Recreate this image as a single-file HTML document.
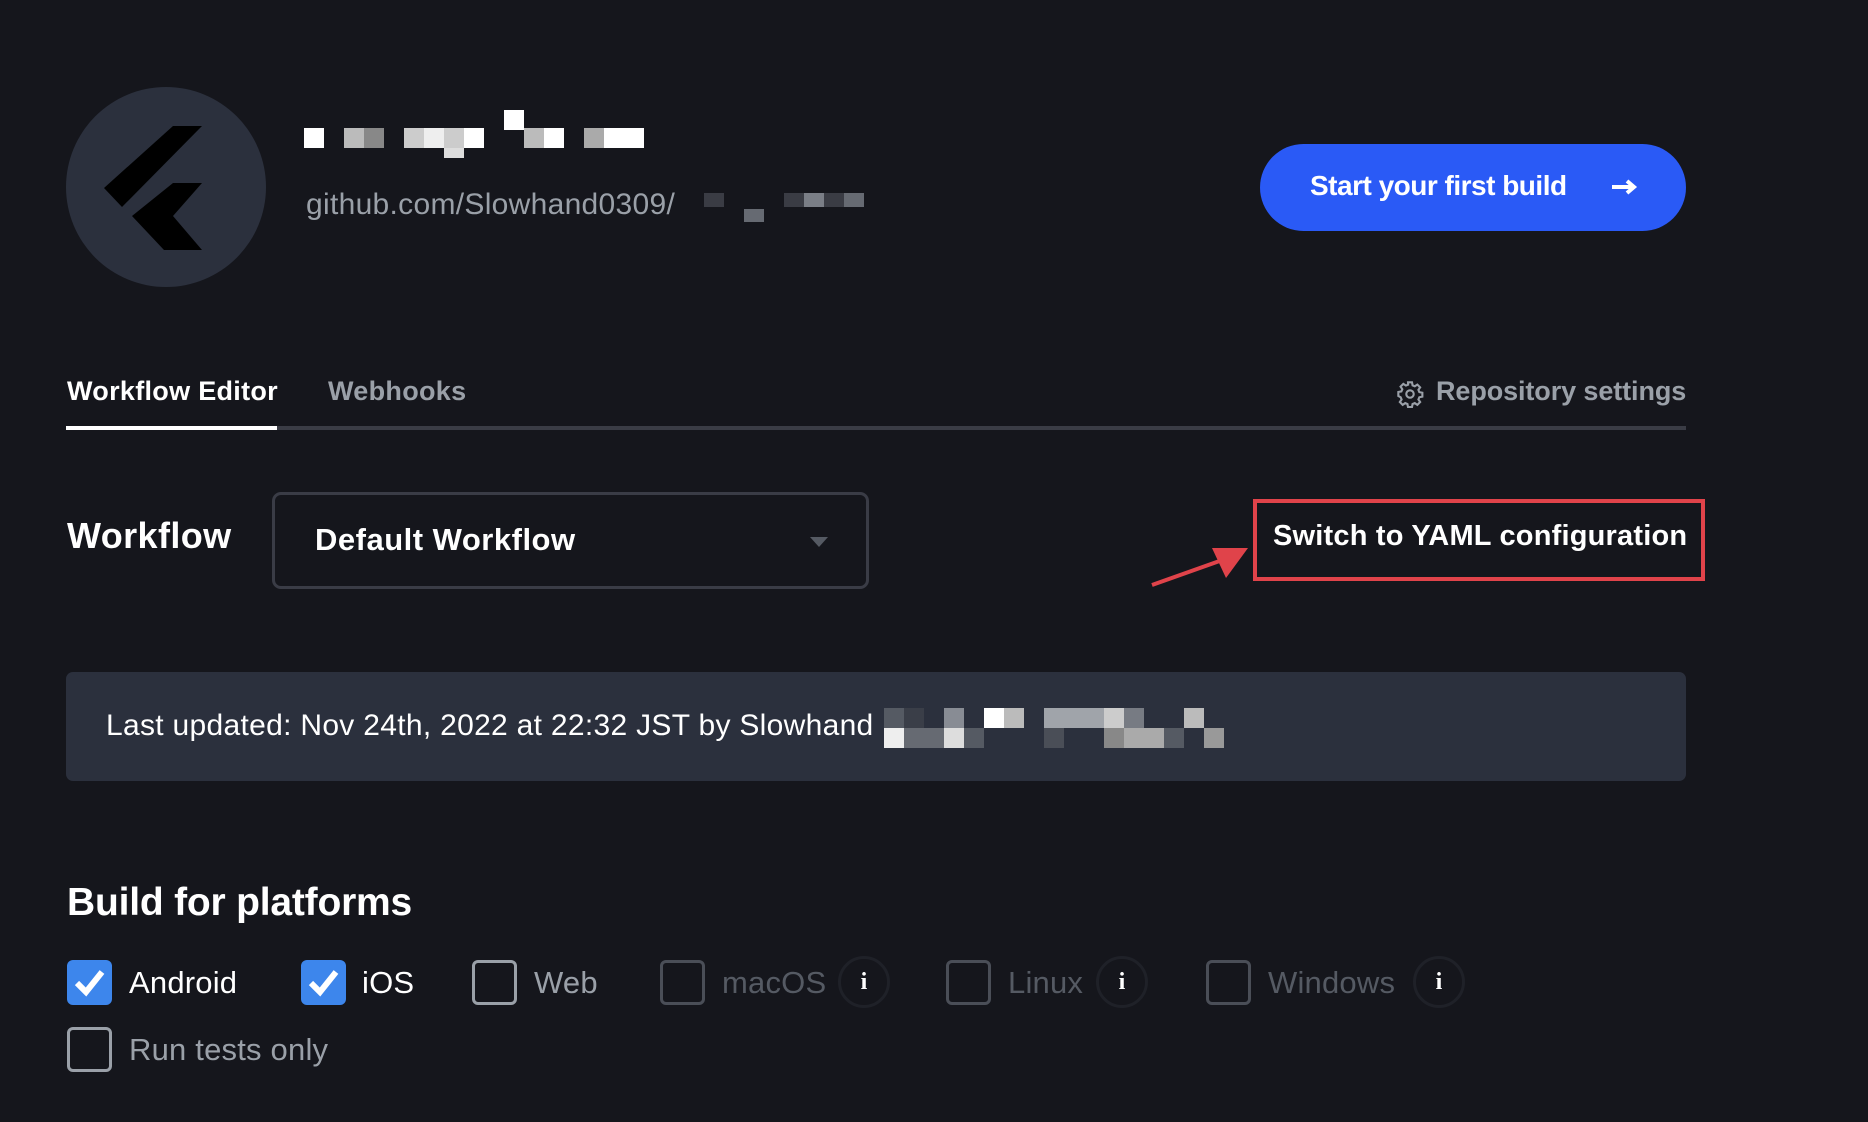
<!DOCTYPE html>
<html><head><meta charset="utf-8"><style>
*{margin:0;padding:0;box-sizing:border-box}
body{width:1868px;height:1122px;background:#15161c;font-family:"Liberation Sans",sans-serif;position:relative;overflow:hidden;color:#fff}
.a{position:absolute;white-space:nowrap}
.px{position:absolute}
.cb{position:absolute;width:45px;height:45px;border-radius:6px;border:3px solid #9aa0a8}
.cb.on{background:#3d86ec;border:none}
.cb.dis{border-color:#4a4e57}
.lbl{position:absolute;font-size:31px;line-height:45px;letter-spacing:0.2px}
.info{position:absolute;width:52px;height:52px;border-radius:50%;border:3px solid #1f2128;color:#fff;font-size:24px;font-weight:bold;text-align:center;line-height:46px;font-family:"Liberation Serif",serif}
</style></head><body>
<div class="a" style="left:66px;top:87px;width:200px;height:200px;border-radius:50%;background:#2b303d"></div>
<svg class="a" style="left:66px;top:87px" width="200" height="200" viewBox="0 0 200 200">
<polygon points="107,39 136,39 56,120 38,101" fill="#000"/>
<polygon points="107,96 136,96 107,129 136,163 98,163 66,129" fill="#000"/>
</svg>
<div class="px" style="left:304px;top:128px;width:20px;height:20px;background:#fff"></div>
<div class="px" style="left:344px;top:128px;width:20px;height:20px;background:#bbb"></div>
<div class="px" style="left:364px;top:128px;width:20px;height:20px;background:#888"></div>
<div class="px" style="left:404px;top:128px;width:20px;height:20px;background:#ccc"></div>
<div class="px" style="left:424px;top:128px;width:20px;height:20px;background:#eee"></div>
<div class="px" style="left:444px;top:128px;width:20px;height:20px;background:#ccc"></div>
<div class="px" style="left:464px;top:128px;width:20px;height:20px;background:#fff"></div>
<div class="px" style="left:444px;top:148px;width:20px;height:10px;background:#ddd"></div>
<div class="px" style="left:504px;top:110px;width:20px;height:20px;background:#fff"></div>
<div class="px" style="left:524px;top:128px;width:20px;height:20px;background:#bbb"></div>
<div class="px" style="left:544px;top:128px;width:20px;height:20px;background:#fff"></div>
<div class="px" style="left:584px;top:128px;width:20px;height:20px;background:#aaa"></div>
<div class="px" style="left:604px;top:128px;width:40px;height:20px;background:#fff"></div>
<div class="a" style="left:306px;top:188px;font-size:30px;color:#9aa0a8;letter-spacing:0.3px">github.com/Slowhand0309/</div>
<div class="px" style="left:704px;top:193px;width:20px;height:14px;background:#3a3c44"></div>
<div class="px" style="left:744px;top:209px;width:20px;height:13px;background:#666a72"></div>
<div class="px" style="left:784px;top:193px;width:20px;height:14px;background:#3a3c44"></div>
<div class="px" style="left:804px;top:193px;width:20px;height:14px;background:#7a7e86"></div>
<div class="px" style="left:824px;top:193px;width:20px;height:14px;background:#3a3c44"></div>
<div class="px" style="left:844px;top:193px;width:20px;height:14px;background:#666a72"></div>
<div class="a" style="left:1260px;top:144px;width:426px;height:87px;border-radius:44px;background:#2a5af6"></div>
<div class="a" style="left:1310px;top:170px;font-size:28px;font-weight:bold;letter-spacing:-0.5px">Start your first build</div>
<svg class="a" style="left:1610px;top:177px" width="30" height="20" viewBox="0 0 30 20"><path d="M2 10H24M17 4L24 10L17 16" stroke="#fff" stroke-width="4" fill="none"/></svg>
<div class="a" style="left:67px;top:376px;font-size:27px;font-weight:bold;letter-spacing:0.3px">Workflow Editor</div>
<div class="a" style="left:328px;top:376px;font-size:27px;font-weight:bold;color:#9aa0a8;letter-spacing:0.3px">Webhooks</div>
<svg class="a" style="left:1396px;top:380px" width="28" height="28" viewBox="0 0 24 24" fill="none" stroke="#9aa0a8" stroke-width="1.8"><circle cx="12" cy="12" r="3.2"/><path d="M10.3 2h3.4l.5 2.6 1.9.8 2.2-1.5 2.4 2.4-1.5 2.2.8 1.9 2.6.5v3.4l-2.6.5-.8 1.9 1.5 2.2-2.4 2.4-2.2-1.5-1.9.8-.5 2.6h-3.4l-.5-2.6-1.9-.8-2.2 1.5-2.4-2.4 1.5-2.2-.8-1.9L2 13.7v-3.4l2.6-.5.8-1.9-1.5-2.2 2.4-2.4 2.2 1.5 1.9-.8z"/></svg>
<div class="a" style="left:1436px;top:376px;font-size:27px;font-weight:bold;color:#9aa0a8;letter-spacing:-0.1px">Repository settings</div>
<div class="a" style="left:66px;top:426px;width:1620px;height:4px;background:#3a3c45"></div>
<div class="a" style="left:66px;top:426px;width:211px;height:4px;background:#fff"></div>
<div class="a" style="left:67px;top:515px;font-size:36px;font-weight:bold;letter-spacing:0.4px">Workflow</div>
<div class="a" style="left:272px;top:492px;width:597px;height:97px;border:3px solid #3a3c46;border-radius:9px"></div>
<div class="a" style="left:315px;top:522px;font-size:31px;font-weight:bold;letter-spacing:0.5px">Default Workflow</div>
<div class="a" style="left:810px;top:537px;width:0;height:0;border-left:9px solid transparent;border-right:9px solid transparent;border-top:10px solid #555a63"></div>
<div class="a" style="left:1253px;top:499px;width:452px;height:82px;border:4px solid #e0434a"></div>
<div class="a" style="left:1273px;top:520px;font-size:29px;font-weight:bold;letter-spacing:0.2px">Switch to YAML configuration</div>
<svg class="a" style="left:1148px;top:540px" width="106" height="50" viewBox="0 0 106 50"><line x1="4" y1="45" x2="80" y2="18" stroke="#e0434a" stroke-width="4"/><polygon points="100,8 64,8 78,38" fill="#e0434a"/></svg>
<div class="a" style="left:66px;top:672px;width:1620px;height:109px;border-radius:7px;background:#2b303d"></div>
<div class="a" style="left:106px;top:709px;font-size:30px;letter-spacing:0.3px">Last updated: Nov 24th, 2022 at 22:32 JST by Slowhand</div>
<div class="px" style="left:884px;top:708px;width:20px;height:20px;background:#555a63"></div>
<div class="px" style="left:904px;top:708px;width:20px;height:20px;background:#3a3e48"></div>
<div class="px" style="left:944px;top:708px;width:20px;height:20px;background:#888c94"></div>
<div class="px" style="left:984px;top:708px;width:20px;height:20px;background:#fff"></div>
<div class="px" style="left:1004px;top:708px;width:20px;height:20px;background:#bbb"></div>
<div class="px" style="left:1044px;top:708px;width:60px;height:20px;background:#a0a4aa"></div>
<div class="px" style="left:1104px;top:708px;width:20px;height:20px;background:#ccc"></div>
<div class="px" style="left:1124px;top:708px;width:20px;height:20px;background:#777b83"></div>
<div class="px" style="left:1184px;top:708px;width:20px;height:20px;background:#bbb"></div>
<div class="px" style="left:884px;top:728px;width:20px;height:20px;background:#eee"></div>
<div class="px" style="left:904px;top:728px;width:40px;height:20px;background:#666a72"></div>
<div class="px" style="left:944px;top:728px;width:20px;height:20px;background:#ddd"></div>
<div class="px" style="left:964px;top:728px;width:20px;height:20px;background:#555a63"></div>
<div class="px" style="left:1044px;top:728px;width:20px;height:20px;background:#4a4e57"></div>
<div class="px" style="left:1104px;top:728px;width:20px;height:20px;background:#888"></div>
<div class="px" style="left:1124px;top:728px;width:40px;height:20px;background:#aaa"></div>
<div class="px" style="left:1164px;top:728px;width:20px;height:20px;background:#555a63"></div>
<div class="px" style="left:1204px;top:728px;width:20px;height:20px;background:#999"></div>
<div class="a" style="left:67px;top:881px;font-size:39px;font-weight:bold;letter-spacing:-0.2px">Build for platforms</div>
<svg width="0" height="0" style="position:absolute"><defs><symbol id="ck" viewBox="0 0 45 45"><path d="M10 23L19 32L35 12" stroke="#fff" stroke-width="6" fill="none"/></symbol></defs></svg>
<div class="cb on" style="left:67px;top:960px"><svg width="45" height="45"><use href="#ck"/></svg></div>
<div class="lbl" style="left:129px;top:960px">Android</div>
<div class="cb on" style="left:301px;top:960px"><svg width="45" height="45"><use href="#ck"/></svg></div>
<div class="lbl" style="left:362px;top:960px">iOS</div>
<div class="cb" style="left:472px;top:960px"></div>
<div class="lbl" style="left:534px;top:960px;color:#9aa0a8">Web</div>
<div class="cb dis" style="left:660px;top:960px"></div>
<div class="lbl" style="left:722px;top:960px;color:#555a63">macOS</div>
<div class="info" style="left:838px;top:956px">i</div>
<div class="cb dis" style="left:946px;top:960px"></div>
<div class="lbl" style="left:1008px;top:960px;color:#555a63">Linux</div>
<div class="info" style="left:1096px;top:956px">i</div>
<div class="cb dis" style="left:1206px;top:960px"></div>
<div class="lbl" style="left:1268px;top:960px;color:#555a63">Windows</div>
<div class="info" style="left:1413px;top:956px">i</div>
<div class="cb" style="left:67px;top:1027px"></div>
<div class="lbl" style="left:129px;top:1027px;color:#9aa0a8">Run tests only</div>
</body></html>
